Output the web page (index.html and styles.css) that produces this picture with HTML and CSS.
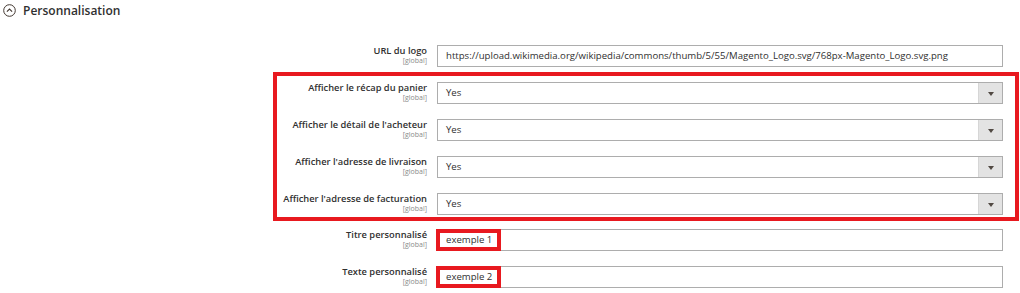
FILE: index.html
```html
<!DOCTYPE html>
<html>
	<head>
		<meta charset="utf-8">
		<title>Personnalisation</title>
		<link rel="stylesheet" href="styles.css">
	</head>
	<body>
		<!--Titre de la section-->
		<div class="section-head">
			<svg class="toggle" width="13" height="13" viewBox="0 0 13 13">
				<circle cx="6.5" cy="6.5" r="5.8" fill="none" stroke="#41362f" stroke-width="1"/>
				<path d="M3.9 7.6 L6.5 5 L9.1 7.6" fill="none" stroke="#41362f" stroke-width="1.1"/>
			</svg>
			<span class="title">Personnalisation</span>
		</div>

		<!--Champs de configuration-->
		<div class="form">
			<div class="row">
				<div class="label">URL du logo<span class="scope">[global]</span></div>
				<div class="control"><div class="input">https://upload.wikimedia.org/wikipedia/commons/thumb/5/55/Magento_Logo.svg/768px-Magento_Logo.svg.png</div></div>
			</div>

			<div class="group">
				<div class="row">
					<div class="label">Afficher le récap du panier<span class="scope">[global]</span></div>
					<div class="control"><div class="select">Yes<span class="arrow"></span></div></div>
				</div>
				<div class="row">
					<div class="label">Afficher le détail de l'acheteur<span class="scope">[global]</span></div>
					<div class="control"><div class="select">Yes<span class="arrow"></span></div></div>
				</div>
				<div class="row">
					<div class="label">Afficher l'adresse de livraison<span class="scope">[global]</span></div>
					<div class="control"><div class="select">Yes<span class="arrow"></span></div></div>
				</div>
				<div class="row">
					<div class="label">Afficher l'adresse de facturation<span class="scope">[global]</span></div>
					<div class="control"><div class="select">Yes<span class="arrow"></span></div></div>
				</div>
			</div>

			<div class="row">
				<div class="label">Titre personnalisé<span class="scope">[global]</span></div>
				<div class="control"><div class="input">exemple 1</div><span class="mark"></span></div>
			</div>
			<div class="row">
				<div class="label">Texte personnalisé<span class="scope">[global]</span></div>
				<div class="control"><div class="input">exemple 2</div><span class="mark"></span></div>
			</div>
		</div>
	</body>
</html>
```

FILE: styles.css
```css
body {
	margin: 0;
	background: #fff;
	font-family: "Open Sans", "DejaVu Sans", sans-serif;
	color: #303030;
}
/* Titre */
.section-head {
	display: flex;
	align-items: center;
	gap: 7px;
	padding: 1px 0 0 3px;
	height: 19px;
}
.toggle {
	display: block;
}
.title {
	font-size: 12px;
	font-weight: 600;
	color: #303030;
}
/* Formulaire */
.form {
	padding-top: 25px;
}
.row {
	display: grid;
	grid-template-columns: 427px 566px;
	column-gap: 10px;
	height: 22px;
	margin-bottom: 15px;
}
.label {
	display: flex;
	flex-direction: column;
	align-items: flex-end;
	font-size: 9.3px;
	font-weight: 600;
	line-height: 12px;
	white-space: nowrap;
}
.scope {
	font-size: 7px;
	font-weight: 400;
	line-height: 8px;
	color: #8a8a8a;
}
.control {
	position: relative;
}
.input, .select {
	box-sizing: border-box;
	height: 22px;
	border: 1px solid #adadad;
	background: #fff;
	font-size: 9.6px;
	line-height: 20px;
	padding-left: 8px;
	white-space: nowrap;
	overflow: hidden;
}
.select {
	position: relative;
}
.arrow {
	position: absolute;
	right: 0;
	top: 0;
	width: 23px;
	height: 20px;
	background: #e3e3e3;
	border-left: 1px solid #d6d6d6;
}
.arrow::after {
	content: "";
	position: absolute;
	left: 9px;
	top: 9px;
	border-left: 3px solid transparent;
	border-right: 3px solid transparent;
	border-top: 4px solid #514943;
}
/* Cadres rouges */
.group {
	margin: -10px 1px 8px 273px;
	border: 4px solid #e8191f;
	padding: 6px 0 2px 0;
}
.group .row {
	grid-template-columns: 150px 566px;
}
.group .row:last-child {
	margin-bottom: 0;
}
.mark {
	position: absolute;
	left: -1px;
	top: 0;
	width: 65px;
	height: 22px;
	box-sizing: border-box;
	border: 4px solid #e8191f;
}
```
